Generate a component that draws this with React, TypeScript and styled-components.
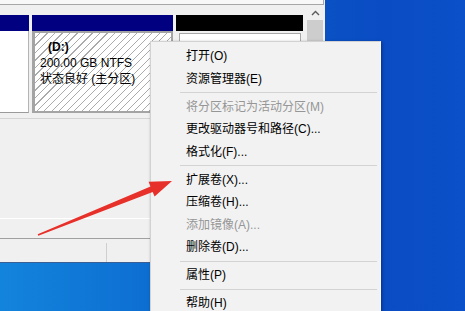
import React from "react";
import styled, { createGlobalStyle } from "styled-components";

const GlobalStyle = createGlobalStyle`
  html, body { margin: 0; padding: 0; }
  body {
    width: 465px;
    height: 311px;
    overflow: hidden;
    background: linear-gradient(90deg, #1384dc 0%, #0d6ed2 32%, #0a52c4 68%, #0a4cc4 82%, #0b50c8 100%);
    font-family: "Liberation Sans", "Noto Sans CJK SC", sans-serif;
  }
`;

const Stage = styled.div`
  position: relative;
  width: 465px;
  height: 311px;
  overflow: hidden;
`;

const Window = styled.div`
  width: 325px;
  height: 263px;
  box-sizing: border-box;
  background: #f0f0f0;
  display: flex;
  flex-direction: column;
  border-bottom: 1px solid #3b5f93;
`;

const TopStrip = styled.div`
  width: 324px;
  height: 5px;
  box-sizing: border-box;
  background: #f8f8f8;
  border-bottom: 1px solid #a7a7a7;
  border-right: 1px solid #a7a7a7;
`;

const Main = styled.div`
  flex: 1;
  display: flex;
  min-height: 0;
`;

const DiskPane = styled.div`
  width: 303px;
  display: flex;
  flex-direction: column;
  padding-top: 10px;
`;

const DiskRow = styled.div`
  display: flex;
  gap: 3px;
  height: 98px;
`;

const Column = styled.div<{ $w: number }>`
  width: ${(p) => p.$w}px;
  display: flex;
  flex-direction: column;
`;

const Header = styled.div<{ $color: string }>`
  height: 16px;
  background: ${(p) => p.$color};
`;

const LabelBody = styled.div`
  flex: 1;
  background: #ffffff;
  border-right: 1px solid #b4b4b4;
  border-bottom: 1px solid #9a9a9a;
`;

const HatchBody = styled.div`
  flex: 1;
  box-sizing: border-box;
  border: 2px solid #a4a4a4;
  border-left-width: 3px;
  background-color: #ffffff;
  background-image: repeating-linear-gradient(
    -45deg,
    transparent 0px,
    transparent 4.3px,
    #ababab 4.3px,
    #ababab 5.3px
  );
  padding: 6px 0 0 5px;
  display: flex;
  flex-direction: column;
`;

const InfoLine = styled.div<{ $bold?: boolean; $indent?: number }>`
  font-size: 12px;
  line-height: 16px;
  color: #000;
  white-space: nowrap;
  font-weight: ${(p) => (p.$bold ? 700 : 400)};
  padding-left: ${(p) => p.$indent ?? 0}px;
`;

const UnallocBody = styled.div`
  flex: 1;
  padding: 2px 2px 2px 3px;
  display: flex;
`;

const UnallocInner = styled.div`
  flex: 1;
  background: #ffffff;
  border: 1px solid #a8a8a8;
`;

const RowDivider = styled.div`
  margin-top: 5px;
  height: 101px;
  box-sizing: border-box;
  border-top: 1px solid #d4d4d4;
  border-bottom: 1px solid #ffffff;
`;

const Scrollbar = styled.div`
  width: 16px;
  margin-left: 4px;
  display: flex;
  flex-direction: column;
`;

const UpButton = styled.div`
  height: 15px;
  display: flex;
  align-items: center;
  justify-content: center;
  background: #f0f0f0;
`;

const Thumb = styled.div`
  height: 120px;
  background: #cdcdcd;
`;

const StatusBar = styled.div`
  height: 24px;
  box-sizing: border-box;
  border-top: 1px solid #a0a0a0;
  display: flex;
  background: #f0f0f0;
`;

const StatusCell = styled.div<{ $w: number }>`
  width: ${(p) => p.$w}px;
  margin-top: 4px;
  border-right: 1px solid #cfcfcf;
`;

const Menu = styled.div`
  position: absolute;
  left: 150px;
  top: 41px;
  width: 231px;
  height: 290px;
  box-sizing: border-box;
  background: #f2f2f2;
  border: 1px solid #d2d2d2;
  border-right-color: #f8f8f8;
  box-shadow: 1px 1px 3px rgba(0, 0, 0, 0.35);
  padding: 3px 2px;
  display: flex;
  flex-direction: column;
`;

const MenuItem = styled.div<{ $disabled?: boolean }>`
  flex: none;
  height: 22.5px;
  line-height: 22.5px;
  padding-left: 33px;
  font-size: 12px;
  white-space: nowrap;
  color: ${(p) => (p.$disabled ? "#969696" : "#000000")};
`;

const Separator = styled.div`
  flex: none;
  height: 5.5px;
  display: flex;
  align-items: center;
  margin: 0 1px 0 27px;
  &::after {
    content: "";
    flex: 1;
    height: 1px;
    background: #d3d3d3;
  }
`;

const ArrowLayer = styled.svg`
  position: absolute;
  left: 0;
  top: 0;
  pointer-events: none;
`;

type Entry = { label: string; disabled?: boolean } | "sep";

const menuEntries: Entry[] = [
  { label: "打开(O)" },
  { label: "资源管理器(E)" },
  "sep",
  { label: "将分区标记为活动分区(M)", disabled: true },
  { label: "更改驱动器号和路径(C)..." },
  { label: "格式化(F)..." },
  "sep",
  { label: "扩展卷(X)..." },
  { label: "压缩卷(H)..." },
  { label: "添加镜像(A)...", disabled: true },
  { label: "删除卷(D)..." },
  "sep",
  { label: "属性(P)" },
  "sep",
  { label: "帮助(H)" },
];

export default function App() {
  return (
    <Stage>
      <GlobalStyle />
      <Window>
        <TopStrip />
        <Main>
          <DiskPane>
            <DiskRow>
              <Column $w={29}>
                <Header $color="#000080" />
                <LabelBody />
              </Column>
              <Column $w={141}>
                <Header $color="#000080" />
                <HatchBody>
                  <InfoLine $bold $indent={8}>(D:)</InfoLine>
                  <InfoLine>200.00 GB NTFS</InfoLine>
                  <InfoLine>状态良好 (主分区)</InfoLine>
                </HatchBody>
              </Column>
              <Column $w={127}>
                <Header $color="#000000" />
                <UnallocBody>
                  <UnallocInner />
                </UnallocBody>
              </Column>
            </DiskRow>
            <RowDivider />
          </DiskPane>
          <Scrollbar>
            <UpButton>
              <svg width="9" height="6" viewBox="0 0 9 6">
                <polyline points="1,5 4.5,1.5 8,5" fill="none" stroke="#5a5a5a" strokeWidth="1.4" />
              </svg>
            </UpButton>
            <Thumb />
          </Scrollbar>
        </Main>
        <StatusBar>
          <StatusCell $w={106} />
        </StatusBar>
      </Window>

      <Menu>
        {menuEntries.map((e, i) =>
          e === "sep" ? (
            <Separator key={i} />
          ) : (
            <MenuItem key={i} $disabled={e.disabled}>
              {e.label}
            </MenuItem>
          )
        )}
      </Menu>

      <ArrowLayer width="465" height="311" viewBox="0 0 465 311">
        <polygon
          points="37.7,234.3 150.5,186.4 148.6,181.8 172,181 154.6,196.6 152.7,192 38.3,235.7"
          fill="#e8302a"
        />
      </ArrowLayer>
    </Stage>
  );
}
